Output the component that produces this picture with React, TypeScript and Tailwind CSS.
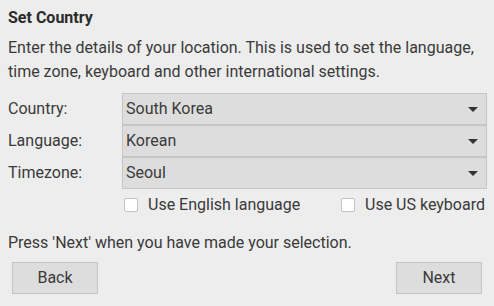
import React from "react";

const rows = [
  { label: "Country:", value: "South Korea" },
  { label: "Language:", value: "Korean" },
  { label: "Timezone:", value: "Seoul" },
];

function Caret() {
  return (
    <svg width="10" height="5" viewBox="0 0 10 5" className="mr-[8px]">
      <path d="M0 0 H10 L5 5 Z" fill="#333333" />
    </svg>
  );
}

export default function App() {
  return (
    <div
      className="w-[494px] h-[306px] bg-[#ededed] text-[#3a3a3a] px-[8px] overflow-hidden"
      style={{ fontFamily: "Roboto, 'Liberation Sans', sans-serif" }}
    >
      <h1 className="pt-[9px] text-[16px] leading-[18px] font-bold text-[#2b2b2b]">Set Country</h1>
      <p className="mt-[9px] text-[16px] leading-[24px]">
        Enter the details of your location. This is used to set the language, time zone, keyboard and other international settings.
      </p>

      {/* dropdowns */}
      <div className="mt-[9px] flex flex-col">
        {rows.map((r) => (
          <div key={r.label} className="flex items-center h-[32px]">
            <span className="w-[114px] text-[16px]">{r.label}</span>
            <div className="flex-1 mr-[-1px] h-[32px] flex items-center justify-between bg-[#dddddd] border border-[#c6c6c6] pl-[3px]">
              <span className="text-[16px]">{r.value}</span>
              <Caret />
            </div>
          </div>
        ))}
      </div>

      {/* checkboxes */}
      <div className="mt-[7px] flex items-center text-[16px] leading-[18px] pl-[116px]">
        <div className="w-[217px] flex items-center">
          <span className="w-[14px] h-[14px] bg-white border border-[#c4c4c4] rounded-[2px]" />
          <span className="ml-[10px]">Use English language</span>
        </div>
        <span className="w-[14px] h-[14px] bg-white border border-[#c4c4c4] rounded-[2px]" />
        <span className="ml-[10px]">Use US keyboard</span>
      </div>

      <p className="mt-[20px] text-[16px] leading-[18px]">Press 'Next' when you have made your selection.</p>

      <div className="mt-[10px] flex justify-between px-[4px]">
        <button className="w-[86px] h-[32px] bg-[#dddddd] border border-[#c4c4c4] text-[16px] text-[#3a3a3a]">Back</button>
        <button className="w-[86px] h-[32px] bg-[#dddddd] border border-[#c4c4c4] text-[16px] text-[#3a3a3a]">Next</button>
      </div>
    </div>
  );
}
